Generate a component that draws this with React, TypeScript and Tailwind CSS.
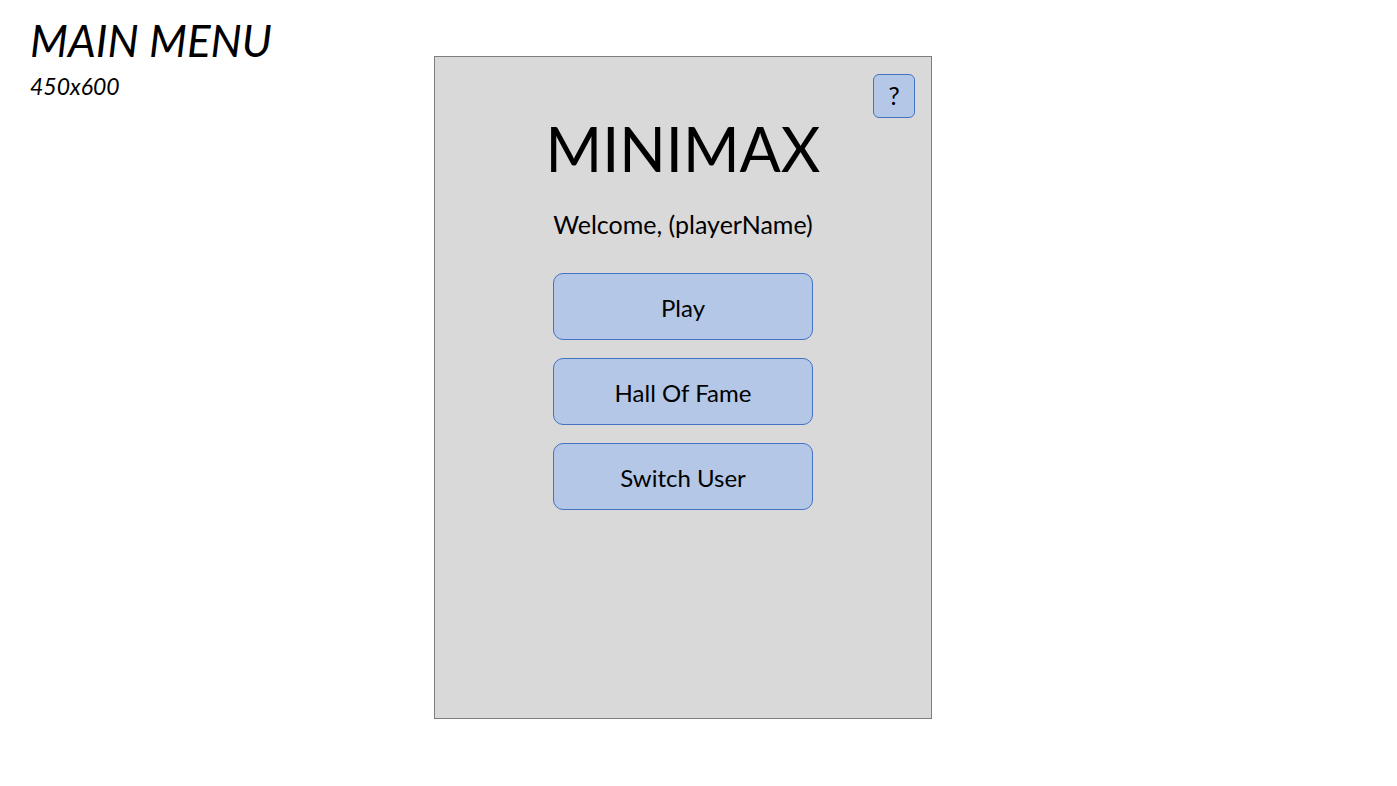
import React from "react";

const font = { fontFamily: "Lato, 'Open Sans', sans-serif" };

function MenuButton({ label }: { label: string }) {
  return (
    <button className="w-[260px] h-[67px] rounded-[10px] border border-[#4472c4] bg-[#b4c7e7] text-[24px] text-black flex items-center justify-center pt-[2px]">
      {label}
    </button>
  );
}

export default function App() {
  return (
    <div className="w-[1397px] h-[786px] bg-white flex" style={font}>
      <div className="w-[434px] pl-[30px] pt-[14px]">
        <div className="italic text-[44px] leading-[52px] text-black">MAIN MENU</div>
        <div className="italic text-[23px] leading-[28px] mt-[6px] text-black">450x600</div>
      </div>
      <div className="mt-[56px] w-[498px] h-[663px] border border-[#7f7f7f] bg-[#d9d9d9] relative flex flex-col items-center">
        <button className="absolute top-[17px] right-[16px] w-[42px] h-[44px] rounded-[6px] border border-[#4472c4] bg-[#b4c7e7] text-[25px] text-black flex items-center justify-center">
          ?
        </button>
        <div className="mt-[55px] text-[61px] leading-[74px] text-black">MINIMAX</div>
        <div className="mt-[23px] text-[25px] leading-[30px] text-black">Welcome, (playerName)</div>
        <div className="mt-[34px] flex flex-col gap-[18px]">
          <MenuButton label="Play" />
          <MenuButton label="Hall Of Fame" />
          <MenuButton label="Switch User" />
        </div>
      </div>
    </div>
  );
}
